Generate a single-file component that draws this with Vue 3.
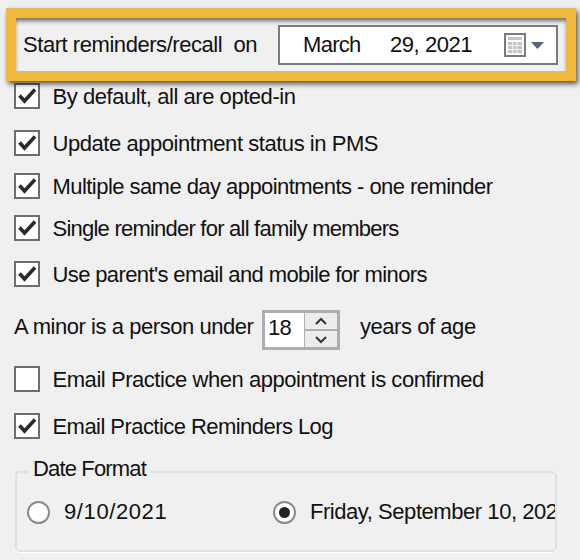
<template>
  <div class="page">
    <div class="highlight">
      <span class="start-label">Start reminders/recall&nbsp; on</span>
      <div class="date-field">
        <span class="month">March</span>
        <span class="day">29, 2021</span>
        <svg class="cal" width="40" height="26" viewBox="0 0 40 26">
          <rect x="1" y="2" width="20" height="22" fill="#fff" stroke="#7a7a7a" stroke-width="2" />
          <rect x="4" y="5" width="14" height="3" fill="#c4c4c8" />
          <rect x="4" y="10" width="14" height="11" fill="#c4c6cc" />
          <path d="M4 13.500h14M4 17.500h14M8.500 10v11M13 10v11" stroke="#f2f2f2" stroke-width="1" />
          <path d="M27 10h13l-6.500 7z" fill="#56617e" />
        </svg>
      </div>
    </div>

    <label v-for="row in topRows" :key="row.text" class="check-row" :class="row.gap">
      <span class="box">
        <svg v-if="row.on" width="22" height="22" viewBox="0 0 22 22">
          <path d="M3.500 10.500l5 5.500L19 4.500" fill="none" stroke="#2b2b2b" stroke-width="3.600" />
        </svg>
      </span>
      <span class="row-text" :class="row.fit">{{ row.text }}</span>
    </label>

    <div class="minor-row">
      <span class="minor-label">A minor is a person under</span>
      <div class="spinner">
        <span class="spin-value">18</span>
        <div class="spin-btns">
          <span class="spin-btn">
            <svg width="14" height="9" viewBox="0 0 14 9"><path d="M2 7l5-5 5 5" fill="none" stroke="#333" stroke-width="2" /></svg>
          </span>
          <span class="spin-btn">
            <svg width="14" height="9" viewBox="0 0 14 9"><path d="M2 2l5 5 5-5" fill="none" stroke="#333" stroke-width="2" /></svg>
          </span>
        </div>
      </div>
      <span class="minor-suffix">years of age</span>
    </div>

    <label v-for="row in bottomRows" :key="row.text" class="check-row" :class="row.gap">
      <span class="box">
        <svg v-if="row.on" width="22" height="22" viewBox="0 0 22 22">
          <path d="M3.500 10.500l5 5.500L19 4.500" fill="none" stroke="#2b2b2b" stroke-width="3.600" />
        </svg>
      </span>
      <span class="row-text" :class="row.fit">{{ row.text }}</span>
    </label>

    <div class="date-format">
      <span class="legend">Date Format</span>
      <div class="radios">
        <label class="radio-item first">
          <span class="radio"></span>
          <span class="radio-date">9/10/2021</span>
        </label>
        <label class="radio-item">
          <span class="radio"><span class="dot"></span></span>
          <span class="clip">Friday, September 10, 2021</span>
        </label>
      </div>
    </div>
  </div>
</template>

<script setup>
const topRows = [
  { text: 'By default, all are opted-in', on: true, gap: 'gap-0' },
  { text: 'Update appointment status in PMS', on: true, gap: 'gap-17' },
  { text: 'Multiple same day appointments - one reminder', on: true, gap: 'gap-13', fit: 'fit-s' },
  { text: 'Single reminder for all family members', on: true, gap: 'gap-12', fit: 'fit-l' },
  { text: "Use parent's email and mobile for minors", on: true, gap: 'gap-16', fit: 'fit-m' },
]

const bottomRows = [
  { text: 'Email Practice when appointment is confirmed', on: false, gap: 'gap-14' },
  { text: 'Email Practice Reminders Log', on: true, gap: 'gap-17', fit: 'fit-s' },
]
</script>

<style>
html,
body {
  margin: 0;
  background: #f0f0f0;
}
</style>

<style scoped>
.page {
  width: 580px;
  height: 560px;
  overflow: hidden;
  box-sizing: border-box;
  padding-top: 8px;
  background: #f0f0f0;
  color: #111;
  font-family: "Liberation Sans", Arial, sans-serif;
  font-size: 22px;
  letter-spacing: -0.45px;
}

.highlight {
  position: relative;
  z-index: 1;
  box-sizing: border-box;
  width: 570px;
  height: 73px;
  margin-left: 6px;
  padding: 0 8px 0 7px;
  display: flex;
  align-items: center;
  justify-content: space-between;
  border: 10px solid #f0b83c;
  background: #f0f0f0;
  box-shadow: 2px 3px 5px rgba(0, 0, 0, 0.65), inset 0 4px 4px -1px rgba(0, 0, 0, 0.55);
}

.date-field {
  box-sizing: border-box;
  width: 280px;
  height: 40px;
  display: flex;
  align-items: center;
  border: 2px solid #7a7a7a;
  background: #fff;
  padding-left: 23px;
}

.month {
  width: 87px;
  letter-spacing: -0.7px;
}

.day {
  width: 114px;
}

.cal {
  flex: none;
}

.check-row {
  height: 30px;
  display: flex;
  align-items: center;
  margin-left: 14px;
}

.gap-12 {
  margin-top: 12px;
}

.gap-13 {
  margin-top: 13px;
}

.gap-14 {
  margin-top: 14px;
}

.gap-16 {
  margin-top: 16px;
}

.gap-17 {
  margin-top: 17px;
}

.box {
  box-sizing: border-box;
  flex: none;
  width: 26px;
  height: 26px;
  border: 2px solid #6d6d6d;
  background: #fff;
  display: flex;
  align-items: center;
  justify-content: center;
}

.row-text {
  margin-left: 12.500px;
  padding-top: 1px;
  white-space: nowrap;
}

.fit-s {
  letter-spacing: -0.55px;
}

.fit-m {
  letter-spacing: -0.62px;
}

.fit-l {
  letter-spacing: -0.77px;
}

.minor-row {
  height: 40px;
  margin: 21px 0 0 14px;
  display: flex;
  align-items: center;
}

.minor-label {
  width: 248px;
  white-space: nowrap;
  padding-bottom: 6px;
}

.spinner {
  box-sizing: border-box;
  width: 78px;
  height: 40px;
  display: flex;
  border: 3px solid #adadb3;
  background: #fff;
}

.spin-value {
  flex: 1;
  padding-left: 3px;
  line-height: 30px;
  letter-spacing: -0.8px;
}

.spin-btns {
  width: 32px;
  display: flex;
  flex-direction: column;
  gap: 2px;
  background: #adadb3;
  padding-left: 1px;
}

.spin-btn {
  flex: 1;
  display: flex;
  align-items: center;
  justify-content: center;
  background: #ececec;
}

.minor-suffix {
  margin-left: 20px;
  padding-bottom: 6px;
  white-space: nowrap;
}

.date-format {
  box-sizing: border-box;
  width: 542px;
  height: 81px;
  margin: 30px 0 0 15px;
  padding-left: 10px;
  border: 2px solid #dce2ea;
  border-radius: 5px;
  box-shadow: 0 1px 0 #fff;
}

.legend {
  display: block;
  width: max-content;
  margin: -16px 0 0 1px;
  padding: 0 5px;
  line-height: 24px;
  letter-spacing: -0.85px;
  background: #f0f0f0;
}

.radios {
  display: flex;
  align-items: center;
  height: 60px;
  padding-top: 1px;
}

.radio-item {
  display: flex;
  align-items: center;
  gap: 14px;
  min-width: 0;
  white-space: nowrap;
}

.radio-item.first {
  width: 246px;
  flex: none;
}

.radio-date {
  letter-spacing: 0.6px;
}

.clip {
  overflow: hidden;
  width: 248px;
}

.radio {
  box-sizing: border-box;
  flex: none;
  width: 23px;
  height: 23px;
  border: 2px solid #8a8a8a;
  border-radius: 50%;
  background: #fff;
  display: flex;
  align-items: center;
  justify-content: center;
}

.dot {
  width: 11px;
  height: 11px;
  border-radius: 50%;
  background: #222;
}
</style>
